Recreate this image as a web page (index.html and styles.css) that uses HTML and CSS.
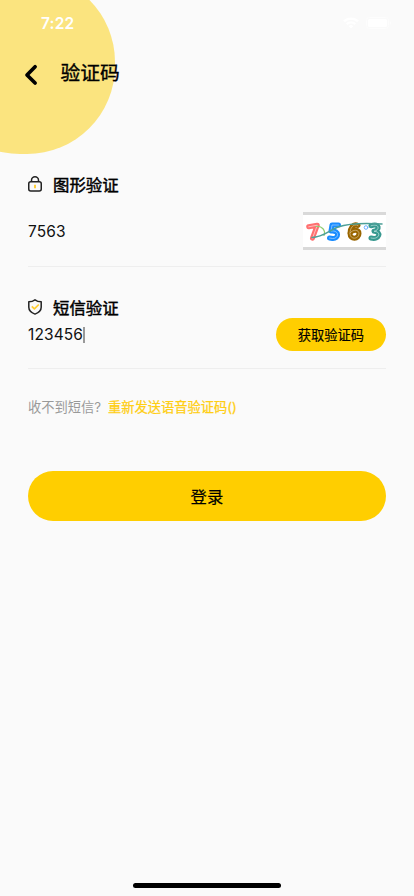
FILE: index.html
```html
<!DOCTYPE html>
<html lang="zh-CN">
<head>
<meta charset="utf-8">
<meta name="viewport" content="width=device-width, initial-scale=1">
<title>验证码</title>
<link rel="stylesheet" href="styles.css">
</head>
<body>
<div class="screen">
  <div class="blob"></div>
  <div class="status-bar">
    <span class="time">7:22</span>
    <div class="status-icons">
      <svg width="16" height="12" viewBox="0 0 16 12" fill="none" stroke="#fff" stroke-width="2.3"><path d="M1 4.4a10 10 0 0 1 14 0M3.7 7.2a6 6 0 0 1 8.6 0"/><path d="M8 11.5 5.7 9.2a3.3 3.3 0 0 1 4.6 0z" fill="#fff" stroke="none"/></svg>
      <svg width="26" height="12" viewBox="0 0 26 12"><rect x=".5" y=".5" width="22" height="11" rx="3" fill="none" stroke="#fdfdfd"/><rect x="2" y="2" width="19" height="8" rx="1.5" fill="#fff"/><path d="M24 4v4q2-2 0-4" fill="#fdfdfd"/></svg>
    </div>
  </div>
  <header class="nav">
    <svg class="back" width="14" height="22" viewBox="0 0 14 22" fill="none" stroke="#000" stroke-width="3.7" stroke-linecap="round" stroke-linejoin="round"><path d="M11.1 2.7 3 11l8.1 8"/></svg>
    <h1>验证码</h1>
  </header>
  <main>
    <section class="field captcha-field">
      <div class="label">
        <svg class="label-icon" width="14" height="16" viewBox="0 0 14 16" fill="none" stroke="#222" stroke-width="1.5"><rect x=".75" y="5.8" width="12.5" height="9.2" rx="2"/><path d="M3.5 5.8V4.200a3.500 3.400 0 0 1 7 0v1.600"/><path d="M7 8.700v3.600" stroke="#ffce32" stroke-width="1.900"/></svg>
        <h2>图形验证</h2>
      </div>
      <div class="row">
        <span class="value">7563</span>
        <svg class="captcha" width="83" height="38" viewBox="0 0 83 38">
          <rect width="83" height="38" fill="#d9d9d9"/>
          <rect y="3" width="83" height="32" fill="#fff"/>
          <g fill="none" stroke-linejoin="round" stroke-linecap="round">
            <g stroke-width="5">
              <path d="M5.700 14.800 14.300 13.200 9.500 26.200" stroke="#ff7070"/>
              <path d="M35.500 13h-6.500l-1 6c9-1 8 8 1.500 7.500L26.500 26" stroke="#198cff"/>
              <path d="M55 13.500c-5-2.500-8 3-8 8 0 6.500 9 6 9 0 0-4-6-4.500-9-.5" stroke="#996500"/>
              <path d="M68 13.800c9-3 9 4.500 3 5.500 8 0 5.500 9-3 6.700" stroke="#37988f"/>
            </g>
            <g stroke-width=".7">
              <path d="M5.700 14.800 14.300 13.200 9.500 26.200" stroke="#ffe0e0"/>
              <path d="M35.500 13h-6.500l-1 6c9-1 8 8 1.500 7.500L26.500 26" stroke="#a9d4ff"/>
              <path d="M55 13.500c-5-2.500-8 3-8 8 0 6.500 9 6 9 0 0-4-6-4.500-9-.5" stroke="#dcc18f"/>
              <path d="M68 13.800c9-3 9 4.500 3 5.500 8 0 5.500 9-3 6.700" stroke="#c5e8e4"/>
            </g>
            <path d="M13 14.500c6-1 10 4 8 9" stroke="#8fcc72" stroke-width="1.200"/>
            <path d="M9 25.500c11 0 17-7 26-10.500 13-4.500 28-4 44-3" stroke="#4c9f97" stroke-width="1.500"/>
            <circle cx="63" cy="15.500" r="1.800" stroke="#6caeff"/>
          </g>
        </svg>
      </div>
    </section>
    <section class="field sms-field">
      <div class="label">
        <svg class="label-icon" width="14" height="16" viewBox="0 0 14 16" fill="none" stroke="#222" stroke-width="1.500" stroke-linejoin="round"><path d="M7 .8q2.500 2 6.200 2v5.500q0 4.500-6.200 6.800Q.8 12.800.8 8.300V2.800Q4.500 2.800 7 .8z"/><path d="m3.800 7.300 2.600 2.600 4.400-4.400" stroke="#ffce32" stroke-width="1.700"/></svg>
        <h2>短信验证</h2>
      </div>
      <div class="row">
        <span class="value">123456<i class="caret"></i></span>
        <button class="code-button">获取验证码</button>
      </div>
    </section>
    <p class="resend"><span>收不到短信?</span><a>重新发送语音验证码()</a></p>
    <button class="login">登录</button>
  </main>
  <div class="home-indicator"></div>
</div>
</body>
</html>
```
FILE: styles.css
```css
* { box-sizing: border-box; }
body {
  margin: 0;
  background: #fafafa;
  color: #000;
  font-family: Inter, "Noto Sans CJK SC", sans-serif;
}
h1, h2, p { margin: 0; }
button {
  border: 0;
  padding: 0;
  background: #ffce00;
  color: #000;
  font-family: inherit;
}
.screen {
  position: relative;
  height: 896px;
  overflow: hidden;
  display: flex;
  flex-direction: column;
}
.blob {
  position: absolute;
  left: -68px;
  top: -26px;
  width: 183px;
  height: 180px;
  border-radius: 88px;
  background: #fbe47f;
}
.status-bar {
  position: relative;
  height: 46px;
  padding: 0 22px 0 41px;
  display: flex;
  align-items: center;
  justify-content: space-between;
}
.time {
  color: #fff;
  font-size: 15.5px;
  font-weight: 600;
  letter-spacing: .2px;
}
.status-icons { display: flex; gap: 7px; }
.nav {
  position: relative;
  height: 54px;
  padding-left: 24px;
  display: flex;
  align-items: center;
}
.back { margin-top: 4px; }
h1 {
  margin: 0 0 1px 22.5px;
  font-size: 19.8px;
  line-height: 30px;
  font-weight: 400;
  -webkit-text-stroke: .35px #000;
}
main {
  position: relative;
  padding: 72px 28px 0;
}
.field { border-bottom: 1px solid #eee; }
.label {
  display: flex;
  align-items: center;
  gap: 11px;
  height: 26px;
}
.label-icon { margin-bottom: 2px; }
h2 {
  font-size: 16.4px;
  line-height: 26px;
  font-weight: 400;
  -webkit-text-stroke: .45px #000;
}
.row {
  display: flex;
  align-items: center;
  justify-content: space-between;
}
.value {
  display: flex;
  align-items: center;
  font-size: 15.5px;
  line-height: 20px;
  letter-spacing: .1px;
  color: #111;
}
.caret {
  width: 2px;
  height: 16px;
  background: #999;
}
.captcha-field { height: 95px; }
.captcha-field .row { height: 38px; margin-top: 14px; }
.captcha-field .value { margin-top: 1px; }
.sms-field { margin-top: 28px; height: 74px; }
.sms-field .row { height: 33px; margin-top: -3px; }
.code-button {
  width: 110px;
  height: 33px;
  border-radius: 17px;
  font-size: 13.25px;
  -webkit-text-stroke: .15px #000;
}
.resend {
  display: flex;
  gap: 7px;
  margin-top: 28px;
  font-size: 13.25px;
  line-height: 20px;
  color: #999;
}
.resend a {
  color: #ffce13;
  -webkit-text-stroke: .25px #ffce13;
}
.login {
  display: block;
  width: 100%;
  height: 50px;
  margin-top: 54px;
  border-radius: 25px;
  font-size: 16.4px;
  -webkit-text-stroke: .2px #000;
}
.home-indicator {
  width: 148px;
  height: 5px;
  margin: auto auto 8px;
  border-radius: 3px;
  background: #000;
}
```
